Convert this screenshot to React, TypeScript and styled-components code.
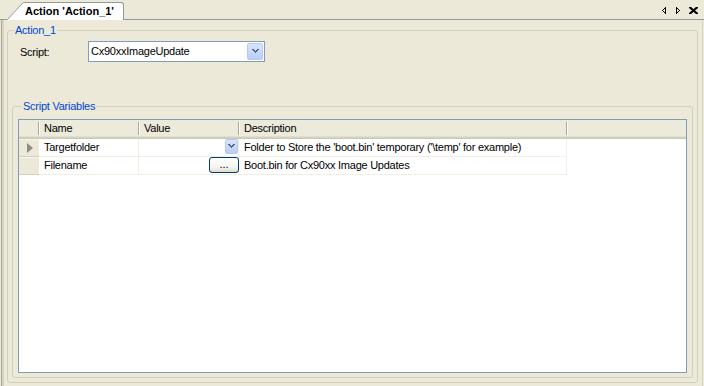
import React from 'react';
import styled, { createGlobalStyle } from 'styled-components';

const Global = createGlobalStyle`
  html, body { margin: 0; padding: 0; background: #ECE9D8; }
  body { font-family: "Liberation Sans", Arial, sans-serif; font-size: 11px; color: #000; letter-spacing: -0.25px; }
  #root { width: 704px; height: 386px; }
`;

const Window = styled.div`
  width: 704px;
  height: 386px;
  display: flex;
  flex-direction: column;
  background: #ECE9D8;
  overflow: hidden;
`;

const TabStrip = styled.div`
  flex: none;
  height: 20px;
  box-sizing: border-box;
  display: flex;
  align-items: flex-end;
  padding-left: 7px;
  border-bottom: 1px solid #919B9C;
`;

const Tab = styled.div`
  display: flex;
  align-items: stretch;
  height: 18px;
  margin-bottom: -1px;
`;

const TabLabel = styled.div`
  box-sizing: border-box;
  background: #fff;
  border-top: 1px solid #919B9C;
  border-right: 1px solid #919B9C;
  border-top-right-radius: 3px;
  padding: 0 9px 0 1px;
  font-weight: bold;
  letter-spacing: 0;
  line-height: 17px;
  white-space: nowrap;
`;

const StripButtons = styled.div`
  margin-left: auto;
  align-self: flex-start;
  margin-top: 7px;
  margin-right: 6px;
  display: flex;
  align-items: flex-start;
`;

const StripIcon = styled.span<{ $gap: number }>`
  display: flex;
  margin-right: ${(p) => p.$gap}px;
`;

const Body = styled.div`
  flex: 1;
  min-height: 0;
  display: flex;
  flex-direction: column;
  margin: 0 1px 0 1px;
  border-left: 1px solid #ACA899;
  border-right: 1px solid #D6D3C4;
  box-shadow: inset 2px 0 0 #D6D3C4, inset 1px 0 0 #ECE9D8;
  padding: 4px 4px 3px 5px;
`;

const Group = styled.fieldset<{ $grow?: boolean; $pad: string; $mt?: number }>`
  margin: ${(p) => p.$mt ?? 0}px 0 0 0;
  min-width: 0;
  border: 1px solid #D0D0BF;
  border-radius: 3px;
  padding: ${(p) => p.$pad};
  display: flex;
  flex-direction: column;
  flex: ${(p) => (p.$grow ? '1' : 'none')};
  min-height: 0;
`;

const Legend = styled.legend<{ $ml: number }>`
  color: #0046D5;
  line-height: 13px;
  padding: 0 1px;
  margin-left: ${(p) => p.$ml}px;
`;

const ScriptRow = styled.div`
  display: flex;
  align-items: center;
  height: 21px;
  padding-left: 8px;
`;

const FieldLabel = styled.span`
  width: 68px;
  flex: none;
`;

const ComboBox = styled.div`
  box-sizing: border-box;
  width: 177px;
  height: 21px;
  border: 1px solid #7F9DB9;
  background: #fff;
  padding: 1px;
  display: flex;
  align-items: stretch;
`;

const ComboText = styled.span`
  flex: 1;
  padding-left: 1px;
  line-height: 17px;
`;

const DropButton = styled.span<{ $w: number; $h: number }>`
  box-sizing: border-box;
  width: ${(p) => p.$w}px;
  height: ${(p) => p.$h}px;
  flex: none;
  border: 1px solid #B7CAF5;
  border-radius: 2px;
  background: linear-gradient(#D9E4FD, #BACDF7);
  display: flex;
  align-items: center;
  justify-content: center;
`;

const Grid = styled.div`
  flex: 1;
  min-height: 0;
  border: 1px solid #7F9DB9;
  background: #fff;
  display: grid;
  grid-template-columns: 20px 100px 100px 328px 1fr;
  grid-template-rows: 19px 18px 18px;
  align-content: start;
`;

const HeaderCell = styled.div<{ $sep?: boolean; $lead?: boolean }>`
  box-sizing: border-box;
  padding: 0 0 3px 5px;
  line-height: 16px;
  background:
    ${(p) =>
      p.$sep
        ? 'linear-gradient(#ACA899, #ACA899) right 0 top 2px / 1px 13px no-repeat,'
        : ''}
    ${(p) =>
      p.$lead
        ? 'linear-gradient(#FFFFFF, #FFFFFF) left 0 top 2px / 1px 13px no-repeat,'
        : ''}
    linear-gradient(
      to bottom,
      #EBEADB 0,
      #EBEADB 16px,
      #E2DECD 16px,
      #E2DECD 17px,
      #D6D2C2 17px,
      #D6D2C2 18px,
      #CBC7B8 18px
    );
`;

const RowHeader = styled.div`
  box-sizing: border-box;
  background: #ECE9D8;
  border-bottom: 1px solid #D2CFBE;
  box-shadow: inset 0 1px 0 #F7F6F1;
  display: flex;
  align-items: center;
  padding-left: 8px;
`;

const Cell = styled.div<{ $align?: 'start' | 'end' }>`
  box-sizing: border-box;
  border-right: 1px solid #F1EFE2;
  border-bottom: 1px solid #F1EFE2;
  padding-left: 5px;
  line-height: 17px;
  white-space: nowrap;
  overflow: visible;
  display: flex;
  justify-content: ${(p) => (p.$align === 'end' ? 'flex-end' : 'flex-start')};
  align-items: flex-start;
`;

const Filler = styled.div``;

const EllipsisButton = styled.button`
  box-sizing: border-box;
  width: 30px;
  height: 16px;
  margin: 0 -1px 0 0;
  padding: 0 0 2px;
  border: 1px solid #003C74;
  border-radius: 3px;
  background: linear-gradient(#FFFFFF, #F4F3EE 70%, #DCD9CD);
  font-family: "Liberation Sans", Arial, sans-serif;
  font-size: 11px;
  line-height: 10px;
  color: #000;
  position: relative;
  z-index: 1;
`;

const Chevron = () => (
  <svg width={7} height={5} viewBox="0 0 7 5" shapeRendering="crispEdges">
    <path d="M0 0h2v1h1v1h1V1h1V0h2v1h-1v1h-1v1h-1v1h-1v-1h-1v-1h-1V1H0z" fill="#4D6185" />
  </svg>
);

const ArrowLeft = () => (
  <svg width="5" height="7" viewBox="0 0 5 7" shapeRendering="crispEdges">
    <path d="M4 0h1v7h-1zM3 1h1v1h-1zM2 2h1v1h-1zM1 3h1v1h-1zM2 4h1v1h-1zM3 5h1v1h-1z" fill="#000" />
  </svg>
);

const ArrowRight = () => (
  <svg width="5" height="7" viewBox="0 0 5 7" shapeRendering="crispEdges">
    <path d="M0 0h1v7h-1zM1 1h1v1h-1zM2 2h1v1h-1zM3 3h1v1h-1zM2 4h1v1h-1zM1 5h1v1h-1z" fill="#000" />
  </svg>
);

const CloseIcon = () => (
  <svg width="9" height="7" viewBox="0 0 9 7">
    <path d="M1 0.5 L8 6.5 M8 0.5 L1 6.5" stroke="#000" strokeWidth="2.2" strokeLinecap="square" />
  </svg>
);

const TabSlant = () => (
  <svg width="17" height="18" viewBox="0 0 17 18">
    <polygon points="0,18 16,0.5 17,0.5 17,18" fill="#fff" />
    <path d="M0.5 17.5 L15.5 1.2 Q16.2 0.5 17 0.5" fill="none" stroke="#919B9C" strokeWidth="1" />
  </svg>
);

const RowGlyph = () => (
  <svg width="6" height="10" viewBox="0 0 6 10">
    <polygon points="0,0 6,5 0,10" fill="#8E8C84" />
  </svg>
);

const rows = [
  {
    name: 'Targetfolder',
    kind: 'drop' as const,
    desc: "Folder to Store the 'boot.bin' temporary ('\\temp' for example)",
    current: true,
  },
  {
    name: 'Filename',
    kind: 'browse' as const,
    desc: 'Boot.bin for Cx90xx Image Updates',
    current: false,
  },
];

export default function App() {
  return (
    <Window>
      <Global />
      <TabStrip>
        <Tab>
          <TabSlant />
          <TabLabel>Action 'Action_1'</TabLabel>
        </Tab>
        <StripButtons>
          <StripIcon $gap={10}>
            <ArrowLeft />
          </StripIcon>
          <StripIcon $gap={8}>
            <ArrowRight />
          </StripIcon>
          <StripIcon $gap={0}>
            <CloseIcon />
          </StripIcon>
        </StripButtons>
      </TabStrip>
      <Body>
        <Group $grow $pad="4px 4px 4px 4px">
          <Legend $ml={2}>Action_1</Legend>
          <ScriptRow>
            <FieldLabel>Script:</FieldLabel>
            <ComboBox>
              <ComboText>Cx90xxImageUpdate</ComboText>
              <DropButton $w={16} $h={17}>
                <Chevron />
              </DropButton>
            </ComboBox>
          </ScriptRow>
          <Group $grow $mt={38} $pad="6px 5px 4px 5px">
            <Legend $ml={4}>Script Variables</Legend>
            <Grid>
              <HeaderCell $sep />
              <HeaderCell $sep $lead>Name</HeaderCell>
              <HeaderCell $sep $lead>Value</HeaderCell>
              <HeaderCell $sep $lead>Description</HeaderCell>
              <HeaderCell $lead />
              {rows.map((r) => (
                <React.Fragment key={r.name}>
                  <RowHeader>{r.current && <RowGlyph />}</RowHeader>
                  <Cell>{r.name}</Cell>
                  <Cell $align="end">
                    {r.kind === 'drop' ? (
                      <DropButton $w={13} $h={15}>
                        <Chevron />
                      </DropButton>
                    ) : (
                      <EllipsisButton>...</EllipsisButton>
                    )}
                  </Cell>
                  <Cell>{r.desc}</Cell>
                  <Filler />
                </React.Fragment>
              ))}
            </Grid>
          </Group>
        </Group>
      </Body>
    </Window>
  );
}
